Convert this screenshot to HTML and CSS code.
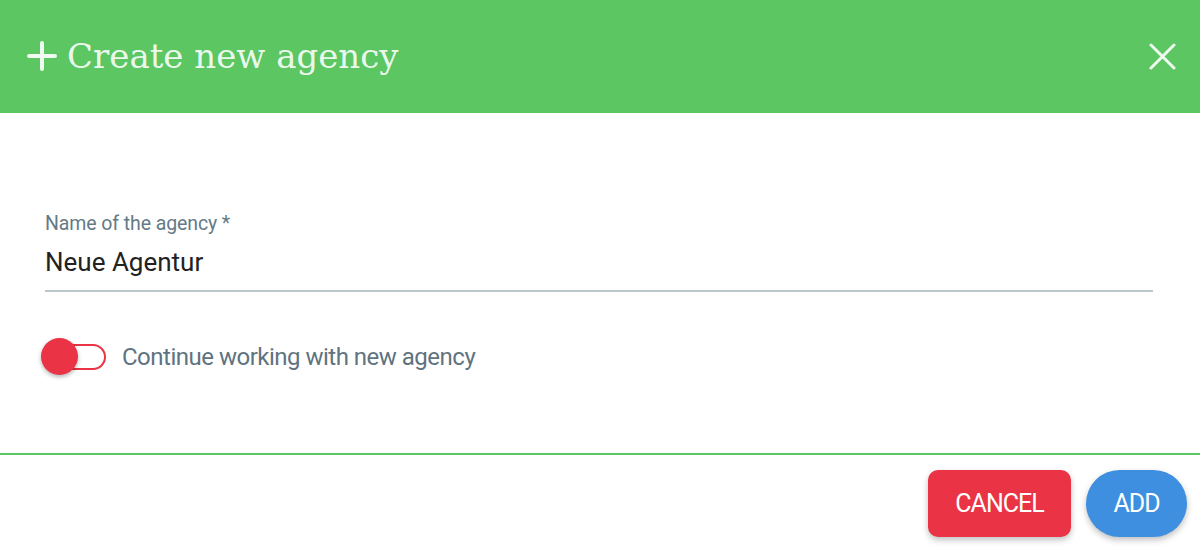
FILE: index.html
```html
<!DOCTYPE html>
<html lang="en">
<head>
<meta charset="utf-8">
<title>Create new agency</title>
<link rel="stylesheet" href="styles.css">
</head>
<body>
<div class="dialog">
  <header class="header">
    <div class="title">
      <svg class="plus" width="30" height="30" viewBox="0 0 30 30"><path d="M15 2V28M2 15H28" stroke="currentColor" stroke-width="4" stroke-linecap="round" fill="none"/></svg>
      <h1 class="title-text">Create new agency</h1>
    </div>
    <svg class="close" width="27" height="27" viewBox="0 0 27 27"><path d="M2 2L25 25M25 2L2 25" stroke="currentColor" stroke-width="3" stroke-linecap="round" fill="none"/></svg>
  </header>
  <main class="content">
    <div class="field">
      <label class="field-label">Name of the agency *</label>
      <div class="field-value">Neue Agentur</div>
    </div>
    <div class="toggle-row">
      <span class="toggle"><span class="track"></span><span class="knob"></span></span>
      <span class="toggle-label">Continue working with new agency</span>
    </div>
  </main>
  <footer class="footer">
    <button class="btn btn-cancel">CANCEL</button>
    <button class="btn btn-add">ADD</button>
  </footer>
</div>
</body>
</html>
```
FILE: styles.css
```css
* { box-sizing: border-box; }
html, body { margin: 0; padding: 0; background: #fff; }
body { font-family: Roboto, "Liberation Sans", sans-serif; width: 1200px; height: 548px; overflow: hidden; }
.dialog { display: flex; flex-direction: column; height: 548px; }
.header {
  height: 113px; background: #5cc663; color: rgba(255,255,255,0.9);
  display: flex; align-items: center; justify-content: space-between;
  padding: 0 24px 0 27px;
}
.title { display: flex; align-items: center; gap: 10px; }
.plus { display: block; margin-top: -1px; }
.title-text { margin: 0; font-family: "DejaVu Serif", serif; font-weight: normal; font-size: 34px; line-height: 1; margin-top: -2px; }
.close { display: block; }
.content { flex: 1; padding: 100px 47px 0 45px; }
.field { border-bottom: 2px solid #bcc7cc; padding-bottom: 12px; }
.field-label { display: block; font-size: 19.5px; color: #647a86; line-height: 22px; letter-spacing: -0.1px; }
.field-value { font-size: 26px; color: #222; line-height: 32px; margin-top: 11px; }
.toggle-row { display: flex; align-items: center; margin-top: 46px; margin-left: -4px; }
.toggle { position: relative; width: 65px; height: 38px; display: block; }
.track { position: absolute; left: 18px; top: 6px; width: 47px; height: 26px; border: 2px solid #ea3344; border-radius: 13px; background: #fff; }
.knob { position: absolute; left: 0; top: 0; width: 37px; height: 37px; border-radius: 50%; background: #ea3344; box-shadow: 0 2px 4px rgba(0,0,0,0.3); }
.toggle-label { font-size: 24px; color: #5f7380; margin-left: 16px; letter-spacing: -0.5px; }
.footer { border-top: 2px solid #5cc663; padding: 15px 13px 11px 0; display: flex; justify-content: flex-end; gap: 15px; }
.btn { border: none; height: 67px; font-family: Roboto, sans-serif; font-size: 25px; letter-spacing: -1px; color: #fff; box-shadow: 0 3px 6px rgba(0,0,0,0.25); padding: 0; }
.btn-cancel { width: 143px; border-radius: 10px; background: #ea3344; }
.btn-add { width: 101px; border-radius: 34px; background: #3f8fe1; }
```
